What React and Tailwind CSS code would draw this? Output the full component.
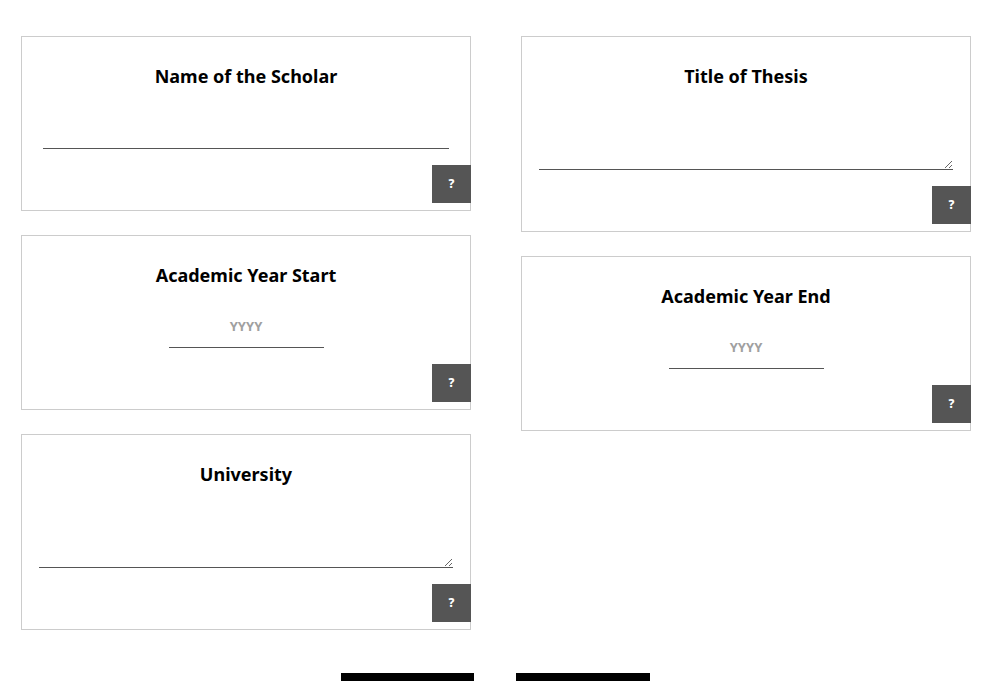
import { useState } from 'react'

const font = { fontFamily: '"Noto Sans", "Open Sans", Arial, sans-serif' }

function HelpButton() {
    return (
        <div className="flex justify-end mt-[16px] -mr-px">
            <button className="w-[39px] h-[38px] bg-[#555555] text-white text-[12px] font-extrabold flex items-center justify-center">
                ?
            </button>
        </div>
    )
}

function TextCard({ title }) {
    const [value, setValue] = useState('')
    return (
        <div className="border border-[#cccccc] bg-white pt-[27px] pb-[7px]">
            <h3 className="text-[18px] leading-[24px] font-bold text-center text-black">{title}</h3>
            <div className="mx-[21px] mt-[30px]">
                <input
                    value={value}
                    onChange={(e) => setValue(e.target.value)}
                    className="block w-full h-[31px] border-b border-[#555555] outline-none text-[14px] px-1"
                />
            </div>
            <HelpButton />
        </div>
    )
}

function YearCard({ title }) {
    const [value, setValue] = useState('')
    return (
        <div className="border border-[#cccccc] bg-white pt-[27px] pb-[7px]">
            <h3 className="text-[18px] leading-[24px] font-bold text-center text-black">{title}</h3>
            <div className="flex justify-center mt-[30px]">
                <input
                    value={value}
                    onChange={(e) => setValue(e.target.value)}
                    placeholder="YYYY"
                    className="block w-[155px] h-[31px] pb-[12px] border-b border-[#555555] outline-none text-center text-[13px] font-bold placeholder:text-[#a0a0a0]"
                />
            </div>
            <HelpButton />
        </div>
    )
}

function AreaCard({ title }) {
    const [value, setValue] = useState('')
    return (
        <div className="border border-[#cccccc] bg-white pt-[27px] pb-[7px]">
            <h3 className="text-[18px] leading-[24px] font-bold text-center text-black">{title}</h3>
            <div className="mx-[17px] mt-[30px]">
                <textarea
                    value={value}
                    onChange={(e) => setValue(e.target.value)}
                    className="block w-full h-[52px] border-b border-[#555555] outline-none text-[14px] px-1"
                />
            </div>
            <HelpButton />
        </div>
    )
}

export default function App() {
    return (
        <div className="bg-white min-h-screen pt-[36px] pl-[21px] pr-[20px]" style={font}>
            <div className="grid grid-cols-2 gap-x-[50px] items-start">
                <div className="flex flex-col gap-6">
                    <TextCard title="Name of the Scholar" />
                    <YearCard title="Academic Year Start" />
                    <AreaCard title="University" />
                </div>
                <div className="flex flex-col gap-6">
                    <AreaCard title="Title of Thesis" />
                    <YearCard title="Academic Year End" />
                </div>
            </div>
            {/* nav buttons, mostly below the fold */}
            <div className="flex justify-center gap-[42px] mt-[43px] pr-px">
                <button className="w-[133px] h-[36px] bg-black" />
                <button className="w-[134px] h-[36px] bg-black" />
            </div>
        </div>
    )
}
